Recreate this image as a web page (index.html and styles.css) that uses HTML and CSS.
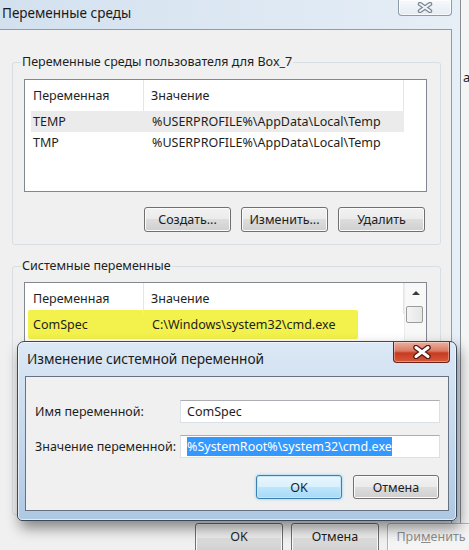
FILE: index.html
```html
<!DOCTYPE html>
<html lang="ru">
<head>
  <meta charset="UTF-8">
  <meta name="viewport" content="width=device-width, initial-scale=1.0">
  <title>Переменные среды</title>
  <link rel="stylesheet" href="styles.css">
</head>
<body>
  <div class="desktop">
    <div class="window">
      <div class="titlebar">
        <span class="title">Переменные среды</span>
        <div class="close close-inactive">
          <svg width="16" height="11" viewBox="0 0 16 11">
            <path d="M3 2 L13 9 M13 2 L3 9" stroke="#7d8895" stroke-width="4.5" stroke-linecap="round"/>
            <path d="M3 2 L13 9 M13 2 L3 9" stroke="#f4f6f8" stroke-width="2" stroke-linecap="round"/>
          </svg>
        </div>
      </div>
      <div class="panel">
        <fieldset class="group">
          <legend>Переменные среды пользователя для Box_7</legend>
          <div class="listbox listbox-user">
            <div class="lv-header">
              <span class="col-name">Переменная</span>
              <span class="col-value">Значение</span>
              <span class="col-rest"></span>
            </div>
            <div class="lv-row is-selected">
              <span class="cell-name">TEMP</span>
              <span class="cell-value">%USERPROFILE%\AppData\Local\Temp</span>
            </div>
            <div class="lv-row">
              <span class="cell-name">TMP</span>
              <span class="cell-value">%USERPROFILE%\AppData\Local\Temp</span>
            </div>
          </div>
          <div class="buttons">
            <button class="btn">Создать...</button>
            <button class="btn">Изменить...</button>
            <button class="btn">Удалить</button>
          </div>
        </fieldset>

        <fieldset class="group group-system">
          <legend>Системные переменные</legend>
          <div class="listbox listbox-system">
            <div class="lv-main">
              <div class="lv-header">
                <span class="col-name">Переменная</span>
                <span class="col-value">Значение</span>
                <span class="col-rest"></span>
              </div>
              <div class="lv-row is-marked">
                <span class="cell-name">ComSpec</span>
                <span class="cell-value">C:\Windows\system32\cmd.exe</span>
              </div>
            </div>
            <div class="scrollbar">
              <div class="sb-arrow"></div>
              <div class="sb-thumb"></div>
            </div>
          </div>
        </fieldset>
      </div>
    </div>
    <div class="behind">a</div>
  </div>

  <div class="footer">
    <button class="btn">OK</button>
    <button class="btn">Отмена</button>
    <button class="btn" disabled>При<u>м</u>енить</button>
  </div>

  <div class="dialog">
    <div class="dialog-titlebar">
      <span class="dialog-title">Изменение системной переменной</span>
      <div class="close close-active">
        <svg width="20" height="14" viewBox="0 0 20 14">
          <path d="M4 2.5 L16 11.5 M16 2.5 L4 11.5" stroke="#5a1a10" stroke-width="5.5" stroke-linecap="round"/>
          <path d="M4 2.5 L16 11.5 M16 2.5 L4 11.5" stroke="#ffffff" stroke-width="3" stroke-linecap="round"/>
        </svg>
      </div>
    </div>
    <div class="dialog-body">
      <div class="form">
        <label class="form-label">Имя переменной:</label>
        <div class="textbox">ComSpec</div>
        <label class="form-label">Значение переменной:</label>
        <div class="textbox"><span class="selection">%SystemRoot%\system32\cmd.exe</span></div>
      </div>
      <div class="dialog-buttons">
        <button class="btn btn-default">OK</button>
        <button class="btn">Отмена</button>
      </div>
    </div>
  </div>
</body>
</html>
```

FILE: styles.css
```css
body {
  margin: 0;
  width: 469px;
  height: 550px;
  overflow: hidden;
  position: relative;
  font-family: "Noto Sans", "Open Sans", sans-serif;
  font-size: 12.5px;
  color: #1e1e1e;
  background-color: #f0f0f0;
}
.desktop {
  display: flex;
  height: 523px;
  overflow: hidden;
}
.window {
  width: 460px;
  flex: none;
  box-sizing: border-box;
  padding-right: 8px;
  display: flex;
  flex-direction: column;
  background: linear-gradient(90deg, #d3e1ef 0%, #dde8f3 55%, #e6eef6 100%);
}
.titlebar {
  height: 29px;
  flex: none;
  display: flex;
  justify-content: space-between;
  align-items: flex-start;
}
.title {
  padding-left: 2px;
  font-size: 13.5px;
  line-height: 27px;
  color: #1a1a1a;
}
.close {
  display: flex;
  align-items: center;
  justify-content: center;
  box-sizing: border-box;
  border-radius: 0 0 4px 4px;
}
.close-inactive {
  width: 54px;
  height: 16px;
  border: 1px solid #8d9bab;
  border-top: none;
  background: linear-gradient(#f7f9fc, #e4ecf4);
  box-shadow: inset 0 0 0 1px rgba(255, 255, 255, 0.7);
}
.panel {
  flex: 1;
  background-color: #f0f0f0;
  border-top: 1px solid #8e9caa;
  border-right: 1px solid #8e9caa;
  padding: 24px 0 0 12px;
}
.group {
  margin: 0;
  width: 429px;
  box-sizing: border-box;
  border: 1px solid #d5dfe5;
  border-radius: 3px;
  padding: 9px 13px 12px 11px;
}
.group legend {
  padding: 0 1px;
  margin-left: -3px;
  line-height: 16px;
}
.group-system {
  margin-top: 13px;
  padding-top: 8px;
}
.listbox {
  width: 403px;
  box-sizing: border-box;
  border: 1px solid #828790;
  background-color: white;
}
.listbox-user {
  height: 113px;
}
.listbox-system {
  height: 220px;
  display: flex;
}
.lv-main {
  flex: 1;
}
.lv-header {
  display: flex;
  height: 31px;
  line-height: 31px;
}
.lv-header span {
  box-sizing: border-box;
  border-right: 1px solid #e5e5e5;
}
.col-name {
  width: 119px;
  padding-left: 8px;
}
.col-value {
  width: 260px;
  padding-left: 7px;
}
.col-rest {
  flex: 1;
  border-right: none !important;
}
.lv-row {
  display: flex;
  width: 373px;
  height: 21px;
  margin-left: 6px;
  line-height: 21px;
  white-space: nowrap;
}
.lv-row.is-selected {
  background-color: #ebebeb;
}
.cell-name {
  width: 113px;
  flex: none;
  padding-left: 2px;
  box-sizing: border-box;
}
.cell-value {
  padding-left: 8px;
}
.lv-row.is-marked {
  width: 330px;
  margin-left: 3px;
  margin-top: -4px;
  padding: 4px 0;
  background-color: #f3f14c;
  border-radius: 2px;
}
.lv-row.is-marked .cell-name {
  width: 116px;
  padding-left: 5px;
}
.scrollbar {
  width: 21px;
  flex: none;
  background-color: #f8f8f8;
  border-left: 1px solid #ececec;
}
.sb-arrow {
  height: 20px;
  position: relative;
}
.sb-arrow::after {
  content: "";
  position: absolute;
  left: 7px;
  top: 8px;
  border-left: 4px solid transparent;
  border-right: 4px solid transparent;
  border-bottom: 4px solid #3a3a3a;
}
.sb-thumb {
  width: 17px;
  height: 17px;
  box-sizing: border-box;
  margin: 3px 0 0 1px;
  border: 1px solid #9b9b9b;
  border-radius: 2px;
  background: linear-gradient(90deg, #f4f4f4, #e6e6e6);
}
.buttons {
  display: flex;
  justify-content: flex-end;
  gap: 10px;
  margin-top: 15px;
  padding-right: 2px;
}
.btn {
  width: 87px;
  height: 25px;
  box-sizing: border-box;
  padding: 0;
  font-family: inherit;
  font-size: 12.5px;
  color: #1e1e1e;
  border: 1px solid #707070;
  border-radius: 3px;
  background: linear-gradient(#f2f2f2 0%, #ebebeb 50%, #dddddd 50%, #cfcfcf 100%);
  box-shadow: inset 0 0 0 1px #fbfbfb;
}
.btn:disabled {
  color: #8d8d8d;
  border-color: #adb2b5;
  background: #f4f4f4;
}
.behind {
  flex: 1;
  border-left: 1px solid #8a8f96;
  background-color: #f5f5f5;
  padding: 68px 0 0 2px;
  font-size: 13px;
  color: #222;
  overflow: hidden;
}
.footer {
  display: flex;
  gap: 8px;
  padding-left: 195px;
  background-color: #f0f0f0;
}
.footer .btn {
  width: 88px;
  height: 30px;
  flex: none;
  padding-bottom: 3px;
}

/* modal dialog lies over the main window */
.dialog {
  position: absolute;
  left: 17px;
  top: 341px;
  width: 440px;
  box-sizing: border-box;
  padding: 0 7px 9px 7px;
  border: 1px solid #3b4858;
  border-radius: 7px 7px 5px 5px;
  background: linear-gradient(#dce8f5, #c2d7ec 60%, #aec8e2);
  box-shadow: inset 0 0 0 1px rgba(255, 255, 255, 0.6), 3px 7px 14px rgba(0, 0, 0, 0.45);
}
.dialog-titlebar {
  height: 34px;
  display: flex;
  justify-content: space-between;
  align-items: flex-start;
}
.dialog-title {
  padding-left: 2px;
  font-size: 13.7px;
  line-height: 33px;
  color: #1a1a1a;
}
.close-active {
  width: 57px;
  height: 21px;
  margin-right: -1px;
  border: 1px solid #6b2115;
  border-top: none;
  background: linear-gradient(#eab0a0 0%, #db7a62 45%, #c83a20 55%, #d45a3c 100%);
  box-shadow: inset 0 0 0 1px rgba(255, 255, 255, 0.35);
}
.dialog-body {
  background-color: #f0f0f0;
  border: 1px solid #667284;
  padding: 23px 8px 11px 9px;
}
.form {
  display: grid;
  grid-template-columns: 145px 1fr;
  row-gap: 12px;
  align-items: center;
}
.textbox {
  height: 23px;
  box-sizing: border-box;
  background-color: white;
  border: 1px solid #dbdfe6;
  border-top-color: #abadb3;
  padding-left: 6px;
  line-height: 21px;
  white-space: nowrap;
}
.selection {
  background-color: #3399ff;
  color: white;
  padding: 1px 0;
}
.dialog-buttons {
  display: flex;
  justify-content: flex-end;
  gap: 11px;
  margin-top: 17px;
  padding-right: 1px;
}
.dialog-buttons .btn {
  width: 86px;
  height: 24px;
}
.btn-default {
  border-color: #3c7fb1;
  background: linear-gradient(#eaf6fd 0%, #d9f0fc 50%, #bee6fd 50%, #a7d9f5 100%);
  box-shadow: inset 0 0 0 1px #c4e6f8, 0 0 3px #7fc8ee;
}
```
